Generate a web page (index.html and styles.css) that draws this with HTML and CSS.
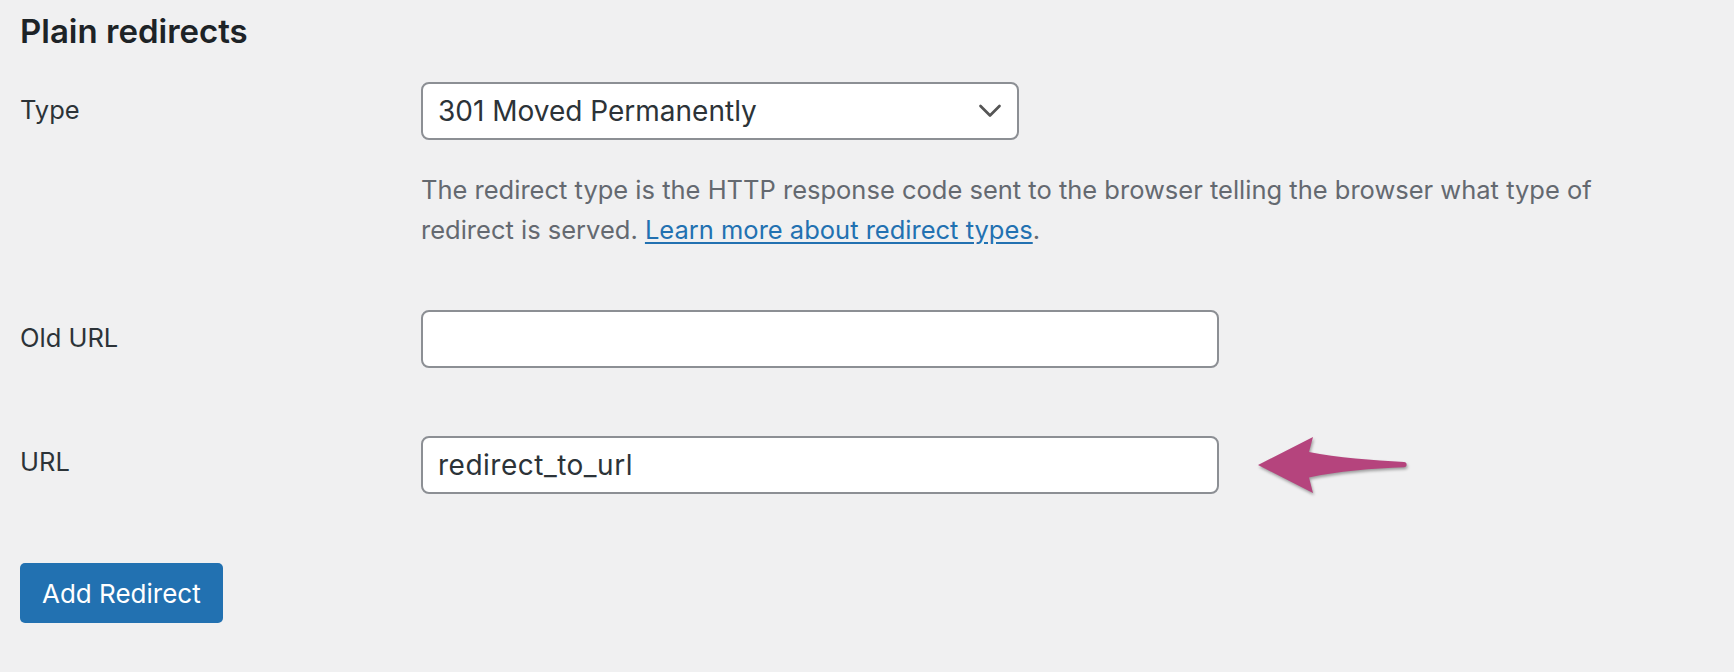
FILE: index.html
```html
<!DOCTYPE html>
<html lang="en">
<head>
  <meta charset="UTF-8" />
  <meta name="viewport" content="width=device-width, initial-scale=1.0" />
  <title>Plain redirects</title>
  <link rel="stylesheet" href="styles.css">
</head>
<body>
<div class="wrap">
  <h2 class="section-title">Plain redirects</h2>

  <div class="form-row type-row">
    <label class="row-label">Type</label>
    <div class="row-field">
      <div class="select-box">
        <span>301 Moved Permanently</span>
        <svg class="chevron" width="24" height="14" viewBox="0 0 24 14">
          <path d="M2.5 2 L12 11.5 L21.5 2" fill="none" stroke="#555" stroke-width="2.7" stroke-linecap="round" stroke-linejoin="round"/>
        </svg>
      </div>
      <p class="description">
        The redirect type is the HTTP response code sent to the browser telling the browser what type of<br>
        redirect is served. <a href="#">Learn more about redirect types</a>.
      </p>
    </div>
  </div>

  <div class="form-row old-url">
    <label class="row-label">Old URL</label>
    <div class="row-field">
      <input class="text-input" type="text" value="" />
    </div>
  </div>

  <div class="form-row new-url">
    <label class="row-label">URL</label>
    <div class="row-field with-arrow">
      <input class="text-input" type="text" value="redirect_to_url" />
      <!-- annotation arrow pointing at the field -->
      <svg class="pointer-arrow" width="156" height="62" viewBox="0 0 156 62">
        <path d="M3 31 L58 3 L54 18 C82 24 118 26 149 28 A2.6 2.6 0 0 1 149 33.2 C118 34.5 82 37 54 43.5 L58 59 Z" fill="#b5447d"/>
      </svg>
    </div>
  </div>

  <button class="add-button">Add Redirect</button>
</div>
</body>
</html>
```

FILE: styles.css
```css
body {
  margin: 0;
  background: #f0f0f1;
  color: #1d2327;
  font-family: "Inter", "Noto Sans", sans-serif;
  font-size: 25.5px;
}
.wrap {
  padding: 0 20px;
}
.section-title {
  margin: 11px 0 0;
  font-size: 33px;
  line-height: 40px;
  font-weight: 600;
  color: #1d2327;
}
.form-row {
  display: grid;
  grid-template-columns: 401px 1fr;
  align-items: start;
}
.type-row {
  margin-top: 31px;
}
.row-label {
  line-height: 56px;
  color: #2c3338;
}
.select-box {
  width: 598px;
  height: 58px;
  box-sizing: border-box;
  border: 2px solid #8c8f94;
  border-radius: 8px;
  background: #fff;
  display: flex;
  align-items: center;
  justify-content: space-between;
  padding: 0 15px;
  font-size: 28px;
  color: #2c3338;
}
.chevron {
  display: block;
}
.description {
  margin: 30px 0 0;
  line-height: 40px;
  color: #646970;
}
.description a {
  color: #2271b1;
  text-decoration: underline;
  text-underline-offset: 3px;
}
.old-url {
  margin-top: 60px;
}
.new-url {
  margin-top: 66px;
}
.text-input {
  width: 798px;
  height: 58px;
  box-sizing: border-box;
  border: 2px solid #8c8f94;
  border-radius: 8px;
  background: #fff;
  padding: 0 15px;
  font-family: inherit;
  font-size: 28px;
  letter-spacing: 0.5px;
  color: #2c3338;
  display: block;
}
.with-arrow {
  display: flex;
  align-items: center;
}
.pointer-arrow {
  margin-left: 36px;
  filter: drop-shadow(1px 2px 1.5px rgba(0, 0, 0, 0.35));
}
.add-button {
  margin-top: 67px;
  height: 60px;
  padding: 0 22px;
  border: none;
  border-radius: 5px;
  background: #2271b1;
  color: #fff;
  font-family: inherit;
  font-size: 26px;
  cursor: pointer;
}
```
